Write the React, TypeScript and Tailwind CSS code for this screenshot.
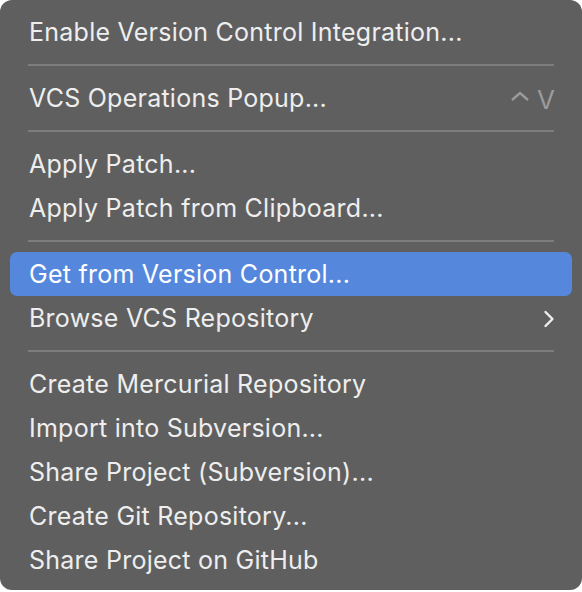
import React from 'react';

type Item =
  | { kind: 'sep' }
  | { kind: 'item'; label: string; active?: boolean; shortcut?: boolean; submenu?: boolean };

const items: Item[] = [
  { kind: 'item', label: 'Enable Version Control Integration...' },
  { kind: 'sep' },
  { kind: 'item', label: 'VCS Operations Popup...', shortcut: true },
  { kind: 'sep' },
  { kind: 'item', label: 'Apply Patch...' },
  { kind: 'item', label: 'Apply Patch from Clipboard...' },
  { kind: 'sep' },
  { kind: 'item', label: 'Get from Version Control...', active: true },
  { kind: 'item', label: 'Browse VCS Repository', submenu: true },
  { kind: 'sep' },
  { kind: 'item', label: 'Create Mercurial Repository' },
  { kind: 'item', label: 'Import into Subversion...' },
  { kind: 'item', label: 'Share Project (Subversion)...' },
  { kind: 'item', label: 'Create Git Repository...' },
  { kind: 'item', label: 'Share Project on GitHub' },
];

export default function App() {
  return (
    <div className="h-[592px] w-[582px] bg-white">
      <div
        className="flex h-[590px] w-[582px] flex-col rounded-[12px] bg-[#5f5f5f] px-[10px] pt-[10px] text-[25px] text-[#eeeeee]"
        style={{ fontFamily: 'Inter, "Noto Sans", sans-serif' }}
      >
        {items.map((it, i) =>
          it.kind === 'sep' ? (
            <div key={i} className="flex h-[22px] items-center px-[18px]">
              <div className="h-[2px] w-full bg-[#7d7d7d]" />
            </div>
          ) : (
            <div
              key={i}
              className={
                'flex h-[44px] items-center justify-between rounded-[7px] pl-[19px] pr-[17px] ' +
                (it.active ? 'bg-[#5588dd] text-white' : '')
              }
            >
              <span className="pt-[2px] tracking-[0.25px]">{it.label}</span>
              {it.shortcut && (
                <span className="flex items-center gap-[7px] pt-[2px] text-[#9b9b9b]">
                  <svg width="20" height="12" viewBox="0 0 20 12" fill="none" className="-mt-[6px]">
                    <path d="M2 10 L10 3 L18 10" stroke="#9b9b9b" strokeWidth="2.4" />
                  </svg>
                  <span className="text-[26px]">V</span>
                </span>
              )}
              {it.submenu && (
                <svg width="12" height="20" viewBox="0 0 12 20" fill="none" className="mt-[2px]">
                  <path d="M2.5 3 L9.5 10 L2.5 17" stroke="#eeeeee" strokeWidth="2.4" strokeLinecap="round" strokeLinejoin="round" />
                </svg>
              )}
            </div>
          )
        )}
      </div>
    </div>
  );
}
